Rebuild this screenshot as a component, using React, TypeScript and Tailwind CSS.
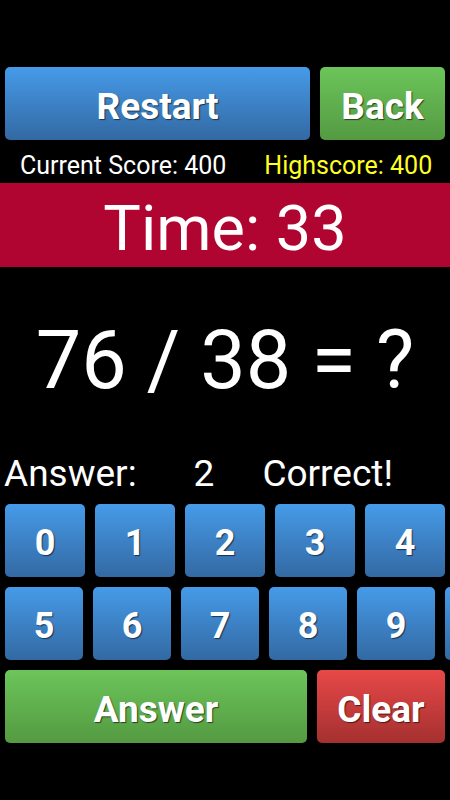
import type { ReactNode } from 'react'

const ROW_ONE = ['0', '1', '2', '3', '4']
const ROW_TWO = ['5', '6', '7', '8', '9', '']

const BLUE = 'bg-gradient-to-b from-[#469be9] to-[#3369a3]'
const GREEN = 'bg-gradient-to-b from-[#6cc55a] to-[#549a42]'
const RED = 'bg-gradient-to-b from-[#e84848] to-[#a53030]'

function GameButton({ children, className }: { children?: ReactNode; className: string }) {
  return (
    <button
      className={`flex shrink-0 items-center justify-center rounded-[5px] pt-[5px] font-bold leading-none text-white [text-shadow:1px_1px_1px_rgba(0,0,0,0.6)] ${className}`}
    >
      {children}
    </button>
  )
}

export default function App() {
  return (
    <div className="h-[800px] w-[450px] overflow-hidden bg-black font-['Roboto',sans-serif] text-white">
      <div className="flex gap-[10px] px-[5px] pt-[67px]">
        <GameButton className={`h-[73px] w-[305px] text-[37px] ${BLUE}`}>Restart</GameButton>
        <GameButton className={`h-[73px] w-[125px] text-[37px] ${GREEN}`}>Back</GameButton>
      </div>

      <div className="flex h-[43px] items-center pl-[20px] pt-[8px] text-[25px] leading-none">
        <span>Current Score: 400</span>
        <span className="ml-[38px] text-[#ffff22]">Highscore: 400</span>
      </div>

      <div className="flex h-[84px] items-center justify-center bg-[#b00530] pt-[6px] text-[63px] leading-none">
        Time: 33
      </div>

      <div className="flex h-[180px] items-center justify-center pt-[6px] text-[81px] leading-none">
        76 / 38 = ?
      </div>

      <div className="flex h-[57px] items-start pl-[4px] pt-[8px] text-[37px] leading-none">
        <span>Answer:</span>
        <span className="ml-[57px]">2</span>
        <span className="ml-[48px]">Correct!</span>
      </div>

      <div className="flex gap-[10px] px-[5px]">
        {ROW_ONE.map((d) => (
          <GameButton key={d} className={`h-[73px] w-[80px] text-[36px] ${BLUE}`}>
            {d}
          </GameButton>
        ))}
      </div>

      <div className="mt-[10px] flex gap-[10px] px-[5px]">
        {ROW_TWO.map((d, i) => (
          <GameButton key={i} className={`h-[73px] w-[78px] text-[36px] ${BLUE}`}>
            {d}
          </GameButton>
        ))}
      </div>

      <div className="mt-[10px] flex gap-[10px] px-[5px]">
        <GameButton className={`h-[73px] w-[302px] text-[37px] ${GREEN}`}>Answer</GameButton>
        <GameButton className={`h-[73px] w-[128px] text-[37px] ${RED}`}>Clear</GameButton>
      </div>
    </div>
  )
}
